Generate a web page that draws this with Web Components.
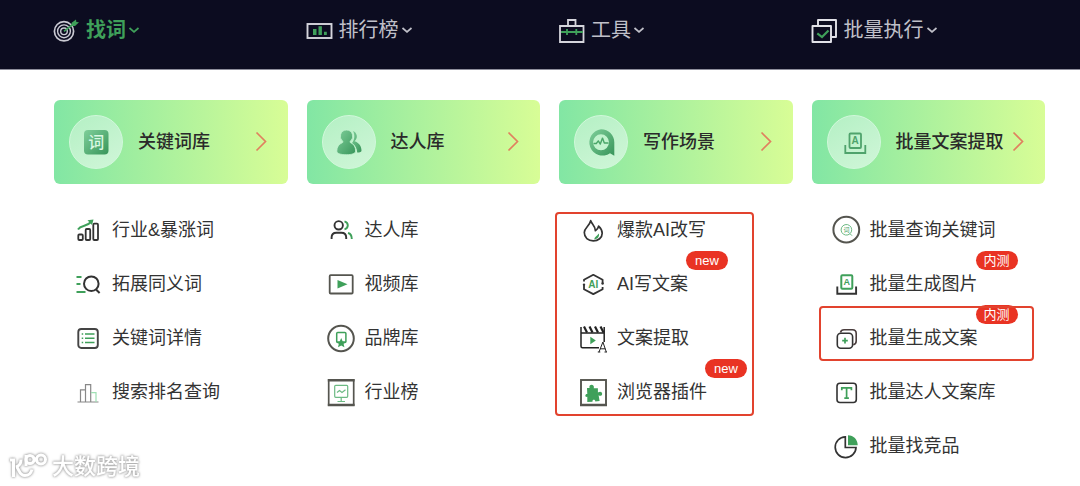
<!DOCTYPE html>
<html lang="zh-CN">
<head>
<meta charset="utf-8">
<meta name="viewport" content="width=device-width, initial-scale=1">
<title>功能导航</title>
<style>
  body {
    margin: 0;
    background: #fff;
    color: #333;
    font-family: "Liberation Sans", "Noto Sans CJK SC", sans-serif;
    font-size: 18px;
    line-height: 24px;
  }
</style>
</head>
<body>
<mega-menu>
  <nav-bar slot="bar">
    <nav-tab icon="target" active>找词</nav-tab>
    <nav-tab icon="chart">排行榜</nav-tab>
    <nav-tab icon="toolbox">工具</nav-tab>
    <nav-tab icon="batch">批量执行</nav-tab>
  </nav-bar>

  <menu-column>
    <feature-card slot="card" icon="card-word">关键词库</feature-card>
    <menu-item icon="trend">行业&amp;暴涨词</menu-item>
    <menu-item icon="expand">拓展同义词</menu-item>
    <menu-item icon="list">关键词详情</menu-item>
    <menu-item icon="rank">搜索排名查询</menu-item>
  </menu-column>

  <menu-column>
    <feature-card slot="card" icon="card-people">达人库</feature-card>
    <menu-item icon="people">达人库</menu-item>
    <menu-item icon="video">视频库</menu-item>
    <menu-item icon="brand">品牌库</menu-item>
    <menu-item icon="board">行业榜</menu-item>
  </menu-column>

  <menu-column framed>
    <feature-card slot="card" icon="card-write">写作场景</feature-card>
    <menu-item icon="flame">爆款AI改写</menu-item>
    <menu-item icon="ai" badge="new">AI写文案</menu-item>
    <menu-item icon="clapper">文案提取</menu-item>
    <menu-item icon="puzzle" badge="new">浏览器插件</menu-item>
  </menu-column>

  <menu-column>
    <feature-card slot="card" icon="card-extract">批量文案提取</feature-card>
    <menu-item icon="query">批量查询关键词</menu-item>
    <menu-item icon="picture" badge="内测">批量生成图片</menu-item>
    <menu-item icon="copy" badge="内测" framed>批量生成文案</menu-item>
    <menu-item icon="text">批量达人文案库</menu-item>
    <menu-item icon="pie">批量找竞品</menu-item>
  </menu-column>
</mega-menu>
<site-mark>大数跨境</site-mark>

<script>
const GRAD = `<defs><linearGradient id="g" x1="0" y1="0" x2="1" y2="1">
  <stop offset="0" stop-color="#7fcf9a"/><stop offset="1" stop-color="#38955a"/></linearGradient></defs>`;
const G = '#3fa05a';

// Each entry: [viewBox size, markup]
const ICONS = {
  target: [26, `<g fill="none" stroke="#c9c9d2"><circle cx="10" cy="14.3" r="9.6" stroke-width="1.7"/><circle cx="10" cy="14.3" r="6.4" stroke-width="1.4"/><circle cx="10" cy="14.3" r="3.3" stroke-width="1.4"/></g>
    <path d="M10 14.3 20 6.5" stroke="${G}" stroke-width="1.6"/><path d="M17 9 17.700 5.700 22 2.600 22.300 5 25 5.300 21 9z" fill="${G}"/>`],
  chart: [26, `<rect x="0.500" y="7" width="24" height="14" fill="none" stroke="#d5d5dc" stroke-width="1.900"/>
    <path d="M6 12h3.500v6H6zM11.500 9.300h3.400V18h-3.400zM17 14.700h2.800V18H17z" fill="${G}"/>`],
  toolbox: [26, `<path d="M1 9h23.500v16H1zM9 9V3h7.500v6" fill="none" stroke="#d5d5dc" stroke-width="1.800"/>
    <path d="M2 15h22M8 12v6M17.300 12v6" stroke="${G}" stroke-width="1.800"/>`],
  batch: [26, `<path d="M6 8.500V3h18v17h-5M.5 9h18.500v16H.5z" fill="none" stroke="#e2e2e8" stroke-width="1.900" stroke-linejoin="round"/>
    <path d="M5.300 16.300 10 20l6.500-6.500" fill="none" stroke="${G}" stroke-width="2.200"/>`],

  'card-word': [28, `${GRAD}<rect x="2" y="2" width="24.500" height="24.500" rx="4" fill="url(#g)"/>
    <text x="14.200" y="20.300" font-size="16" text-anchor="middle" fill="#d9f8e2">词</text>`],
  'card-people': [28, `${GRAD}<g fill="url(#g)"><path d="M18 2.900a6 6 0 0 1 1.500 10.300c4.500 1.300 7 5 7 9.300 0 1.400-1.500 2-4.300 2.100-.2-3.800-1.600-7-5.200-9.600 2.800-3.500 3-8 1-12.100z"/>
    <path d="M11.500 2a6.300 6.300 0 0 1 4 11.100c-.8.800-.6 1.300.3 1.700 3.200 1.300 4.800 4.300 4.800 8.200 0 2.500-3.500 3.700-9.400 3.700S1.800 25.500 1.800 23c0-3.900 2-6.900 5.300-8.200.9-.4 1.100-.9.400-1.700A6.300 6.300 0 0 1 11.500 2z" stroke="#c4f3d0" stroke-width=".8"/></g>`],
  'card-write': [28, `${GRAD}<path fill-rule="evenodd" d="M14 1.300c7.500 0 13.300 5.700 13.300 13v13.500L23 25.300A13.200 13.200 0 1 1 14 1.300zm0 5a8 8 0 1 0 0 16 8 8 0 0 0 0-16z" fill="url(#g)"/>
    <path d="M6.500 15.500h2.800l2-2.600 2 3.200 2.200-6 1.800 4.900h4.200" fill="none" stroke="#4aa568" stroke-width="1.400" stroke-linejoin="round"/>`],
  'card-extract': [28, `<g fill="none" stroke="#4fa36c" stroke-width="1.800"><rect x="9.500" y="5.500" width="11.500" height="14.500" rx="1"/><path d="M5.300 17v8h20v-8"/></g>
    <text x="15.200" y="16.300" font-size="10" font-weight="700" text-anchor="middle" fill="#4fa36c">A</text>`],

  trend: [28, `<g fill="none" stroke="#333" stroke-width="1.800"><rect x="4.300" y="18.500" width="4.500" height="5.500" rx="1"/><rect x="11.700" y="13" width="4.500" height="11" rx="1"/><rect x="19.300" y="7.700" width="4.700" height="16.300" rx="1"/></g>
    <path d="M4 13.500c3-4.800 8-2 13-7.500" fill="none" stroke="${G}" stroke-width="2"/><path d="M13.500 4.200 19.500 3.500 18 9z" fill="${G}"/>`],
  expand: [28, `<path d="M2.500 7h5M2.500 14h4M2.500 22h9" stroke="${G}" stroke-width="1.800"/>
    <circle cx="17.300" cy="13.700" r="7.300" fill="none" stroke="#333" stroke-width="2"/><path d="M22 19.500 25.600 23" stroke="#333" stroke-width="2"/>`],
  list: [28, `<rect x="4.300" y="5" width="19.500" height="19" rx="3" fill="none" stroke="#444" stroke-width="1.900"/>
    <path d="M7.700 10h1.500M11 10h9.500M7.700 14.300h1.500M11 14.300h9.500M7.700 18.500h1.500M11 18.500h9.500" stroke="${G}" stroke-width="1.600"/>`],
  rank: [28, `<path d="M6.500 24V11.800H11M11.500 24V6.700h5.200V24M3.500 24h21" fill="none" stroke="#888" stroke-width="1.200"/>
    <path d="M17 14.700h5V24" fill="none" stroke="#9fe0b4" stroke-width="1.200"/>`],

  people: [28, `<g fill="none" stroke-width="1.900"><g stroke="#333"><circle cx="11.700" cy="9.300" r="4.200"/><path d="M4.600 23v-1.500c0-3 1.800-4.800 4.800-4.800h5c3 0 4.800 1.800 4.800 4.800V23"/></g>
    <path d="M17.500 5.300c4.400 1.200 4.400 6.900 0 8.100M21 17c2.700.7 3.800 2.700 3.800 6" stroke="${G}"/></g>`],
  video: [28, `<rect x="2.700" y="5.200" width="23" height="18.300" rx="1" fill="none" stroke="#55554f" stroke-width="1.800"/>
    <path d="M10.500 10v8.600l10-4.300z" fill="${G}"/>`],
  brand: [28, `<circle cx="14" cy="14.500" r="12.800" fill="none" stroke="#55554f" stroke-width="2"/>
    <rect x="9.700" y="8.500" width="9.200" height="10" rx="1" fill="none" stroke="${G}" stroke-width="1.500"/>
    <path d="m14.200 14 1.400 3.200 3.700.3-2.700 2.300.8 3.500-3.200-1.800-3.200 1.800.8-3.500-2.700-2.300 3.700-.3z" fill="${G}"/>`],
  board: [28, `<rect x="1.700" y="2" width="25" height="25" fill="none" stroke="#55554f" stroke-width="1.700"/><path d="M.8 2.300h26.800M.8 27h26.800" stroke="#55554f" stroke-width="2.500"/>
    <g fill="none" stroke="#6cba83" stroke-width="1.200"><rect x="7.700" y="7.300" width="13" height="12" rx="1"/><path d="M14.200 19.500v4M10.500 23.500h7.500M10 14.500l2.500-2 2.500 2 3.500-2.800"/></g>`],

  flame: [28, `<path d="M11.700 4.700c1 3.300 4.800 5.200 4.700 10 2-.9 2.800-2.300 3.200-4.500 2.500 2.400 3.600 4.600 3.600 7.100 0 4.600-4 7.500-8.900 7.500-5.200 0-9-3.200-9-8.200 0-4.900 5.500-6.800 6.400-11.900z" fill="none" stroke="#333" stroke-width="1.700" stroke-linejoin="round"/>
    <path d="M19.800 17.500c1 3-1.300 5.800-4.600 5.700.3-2.500 2.700-3 4.600-5.700z" fill="${G}"/>`],
  ai: [28, `<path d="M5 11.500V9.700L14.300 4.800l9.300 4.900v4M23.600 17v2.200l-9.300 4.900L5 19.200v-4" fill="none" stroke="#333" stroke-width="1.800" stroke-linejoin="round"/>
    <circle cx="5" cy="14.700" r="1.200" fill="#333"/><circle cx="23.600" cy="13.500" r="1.200" fill="#333"/>
    <text x="14.300" y="18" font-size="10" font-weight="700" text-anchor="middle" fill="${G}">AI</text>`],
  clapper: [28, `<path d="M20 23.800H3.500a1.500 1.500 0 0 1-1.500-1.500V3M25.200 3v15M2 9h23" fill="none" stroke="#222" stroke-width="1.500"/>
    <path d="M5 2.500 8 8.500M10.500 2.500l3 6M16 2.500l3 6M21.500 2.500l3 6" stroke="#222" stroke-width="2.200"/>
    <path d="M11.300 12.700v7.500l5.500-3.700z" fill="${G}"/><path d="M20 28l3.900-10L27.300 28M21.300 24.800h5M18.800 28h2.500M25.500 28h2.500" fill="none" stroke="#222" stroke-width="1"/>`],
  puzzle: [28, `<rect x="2" y="2" width="25" height="25" fill="none" stroke="#55554f" stroke-width="1.900"/><path d="M1 27h27" stroke="#55554f" stroke-width="2.500"/>
    <path d="M8 10h2.600c-1.500-3.800 4.600-4.700 4.300-.7l-.2.900h4.200v4.200c2.800-1.300 4.500-.2 4.200 1.800-.3 1.900-2.200 2-3.500 1.100l1 5.600-4.300.5c0-2.200-3.200-2.200-2.800.3l-5.200.3v-5.200c-2.500 1-2.700-3 0-2.700z" fill="${G}"/>`],

  query: [28, `<circle cx="14.300" cy="13.700" r="12.900" fill="none" stroke="#55554f" stroke-width="2"/>
    <path d="M18 17.700a5.300 5.300 0 1 1 1.700-4 5.300 5.300 0 0 1-1.700 4l2 2" fill="none" stroke="#6cba83" stroke-width="1"/>
    <text x="14.500" y="16.200" font-size="6" text-anchor="middle" fill="${G}">词</text>`],
  picture: [28, `<path d="M5.300 16.500v7.200h18.800v-7.200" fill="none" stroke="#333" stroke-width="1.900"/>
    <rect x="9.300" y="5.200" width="11" height="13.500" rx="1" fill="none" stroke="${G}" stroke-width="2"/>
    <text x="14.800" y="15.300" font-size="9" font-weight="700" text-anchor="middle" fill="${G}">A</text>`],
  copy: [28, `<rect x="5.300" y="9.200" width="15.300" height="15" rx="3.500" fill="none" stroke="#333" stroke-width="1.600"/>
    <path d="M8.500 8.500C9 6.500 10.300 5.800 12 5.800h8.500c2.500 0 3.700 1.200 3.700 3.700V17c0 2-.9 3.400-3 3.800" fill="none" stroke="#4a3d3d" stroke-width="1.600"/>
    <path d="M13 13.800v5.600M10.200 16.600h5.600" stroke="${G}" stroke-width="1.700"/>`],
  text: [28, `<rect x="5" y="5.200" width="19.300" height="19.300" rx="3" fill="none" stroke="#333" stroke-width="1.600"/>
    <path d="M9.800 12.300V9.800h9.600v2.500M14.600 9.800v10.300M12.300 20.200h4.600" fill="none" stroke="${G}" stroke-width="1.700"/>`],
  pie: [28, `<path d="M13.300 4.800A10.400 10.400 0 1 0 24 15.500H13.300z" fill="none" stroke="#333" stroke-width="1.700"/>
    <path d="M16 3.300c5.600.2 9.500 4 9.700 9.900H16z" fill="${G}"/>`],

  down: [12, `<path d="M1.500 4 6 7.800 10.500 4" fill="none" stroke="currentColor" stroke-width="1.700"/>`],
  next: [20, `<path d="M5.500.5 14.500 9.500 5.500 18.500" fill="none" stroke="#e0805f" stroke-width="1.700"/>`]
};

function define(name, css, html, setup) {
  const template = document.createElement('template');
  template.innerHTML = `<style>*{box-sizing:border-box}${css}</style>${html}`;
  customElements.define(name, class extends HTMLElement {
    connectedCallback() {
      if (this.shadowRoot) return;
      const root = this.attachShadow({ mode: 'open' });
      root.append(template.content.cloneNode(true));
      if (setup) setup(this, root);
    }
  });
}

const useIcon = (host, root) =>
  root.querySelector('ui-icon').setAttribute('name', host.getAttribute('icon'));

customElements.define('ui-icon', class extends HTMLElement {
  static observedAttributes = ['name'];
  attributeChangedCallback() {
    const icon = ICONS[this.getAttribute('name')];
    if (!icon) return;
    if (!this.shadowRoot) this.attachShadow({ mode: 'open' });
    this.shadowRoot.innerHTML = `<style>:host{display:block;flex:none;width:${icon[0]}px;height:${icon[0]}px}svg{display:block;overflow:visible}</style>
      <svg width="${icon[0]}" height="${icon[0]}" viewBox="0 0 ${icon[0]} ${icon[0]}" aria-hidden="true">${icon[1]}</svg>`;
  }
});

define('mega-menu', `
  :host { display: block; --cols: repeat(4, minmax(0, 1fr)); --gap: 19px; --inset: 0 35px 0 54px; }
  main { display: grid; grid-template-columns: var(--cols); gap: var(--gap); padding: var(--inset); margin-top: 30px; }
`, `<slot name="bar"></slot><main><slot></slot></main>`);

define('nav-bar', `
  :host { display: block; background: #0c0c20; border-bottom: 1px solid #8e8e9b; }
  nav { display: grid; grid-template-columns: var(--cols); gap: var(--gap); padding: var(--inset); height: 69px; align-items: start; }
`, `<nav aria-label="主导航"><slot></slot></nav>`);

define('nav-tab', `
  :host { display: block; padding-top: 15px; }
  button { display: flex; align-items: center; gap: 6px; padding: 0; border: 0; background: none;
    font: inherit; font-size: 20px; line-height: 30px; color: #c0c0c9; white-space: nowrap; cursor: pointer; }
  span { display: flex; align-items: center; gap: 2px; }
  :host([active]) button { color: #3fa05a; font-weight: 700; }
`, `<button type="button" aria-haspopup="true"><ui-icon></ui-icon><span><slot></slot><ui-icon name="down"></ui-icon></span></button>`, useIcon);

define('menu-column', `
  :host { display: block; }
  .list { position: relative; display: grid; grid-auto-rows: 54px; margin-top: 19px; }
  :host([framed]) .list::after { content: ""; position: absolute; left: -4px; right: 39px; top: 9px; bottom: 3px;
    border: 2px solid #e2432e; border-radius: 4px; pointer-events: none; }
`, `<slot name="card"></slot><div class="list"><slot></slot></div>`);

define('feature-card', `
  :host { display: block; }
  a { display: flex; align-items: center; gap: 15px; height: 84px; padding: 0 17px 0 15px; border-radius: 6px;
    background: linear-gradient(90deg, #82e6a4, #d8fd96); color: #2a2a2a; text-decoration: none; font-weight: 500; white-space: nowrap; }
  .disc { flex: none; display: grid; place-items: center; width: 54px; height: 54px; border-radius: 50%;
    background: linear-gradient(150deg, #b4f0c4, #d0f6d8); border: 1px solid #d2f8dc; }
  .name { flex: 1; min-width: 0; }
  .go { margin-left: -15px; }
`, `<a href="#"><span class="disc"><ui-icon></ui-icon></span><span class="name"><slot></slot></span><ui-icon class="go" name="next"></ui-icon></a>`, useIcon);

define('menu-item', `
  :host { display: grid; position: relative; align-items: center; padding-left: 20px; }
  a { justify-self: start; display: flex; align-items: center; gap: 10px; color: #333; text-decoration: none; white-space: nowrap; }
  .label { position: relative; }
  .badge { position: absolute; left: 100%; bottom: 26px; width: 42px; height: 19px; margin-left: -2px; border-radius: 10px;
    background: #e93323; color: #fff; font-size: 13px; line-height: 19px; text-align: center; }
  .badge[hidden] { display: none; }
  :host([framed])::after { content: ""; position: absolute; left: 7px; right: 11px; top: -5px; bottom: 4px;
    border: 2px solid #e2432e; border-radius: 4px; pointer-events: none; }
`, `<a href="#"><ui-icon></ui-icon><span class="label"><slot></slot><span class="badge" hidden></span></span></a>`, (host, root) => {
  useIcon(host, root);
  if (host.hasAttribute('badge')) {
    const badge = root.querySelector('.badge');
    badge.hidden = false;
    badge.textContent = host.getAttribute('badge');
  }
});

define('site-mark', `
  :host { position: fixed; left: 8px; bottom: 4px; display: flex; align-items: center; gap: 4px; color: #fff;
    font-size: 22px; line-height: 30px; font-weight: 500; filter: drop-shadow(0 0 1px #aaa) drop-shadow(0 0 1px #bbb); }
  svg { display: block; }
`, `<svg width="40" height="30" viewBox="0 0 40 30" aria-hidden="true"><g fill="none" stroke="#fff" stroke-width="3">
  <path d="M2 8h3.500v17M13 7.500c0 4-2 6.500-5 7.500 3 0 2.500 8.500 9 8.500 3.500 0 6-2 7-6M18 3v11"/><circle cx="22" cy="7.500" r="4"/><circle cx="33" cy="7.500" r="4.500"/><path d="M25.500 5.500 29.500 9.500"/></g></svg><span><slot></slot></span>`);
</script>
</body>
</html>
